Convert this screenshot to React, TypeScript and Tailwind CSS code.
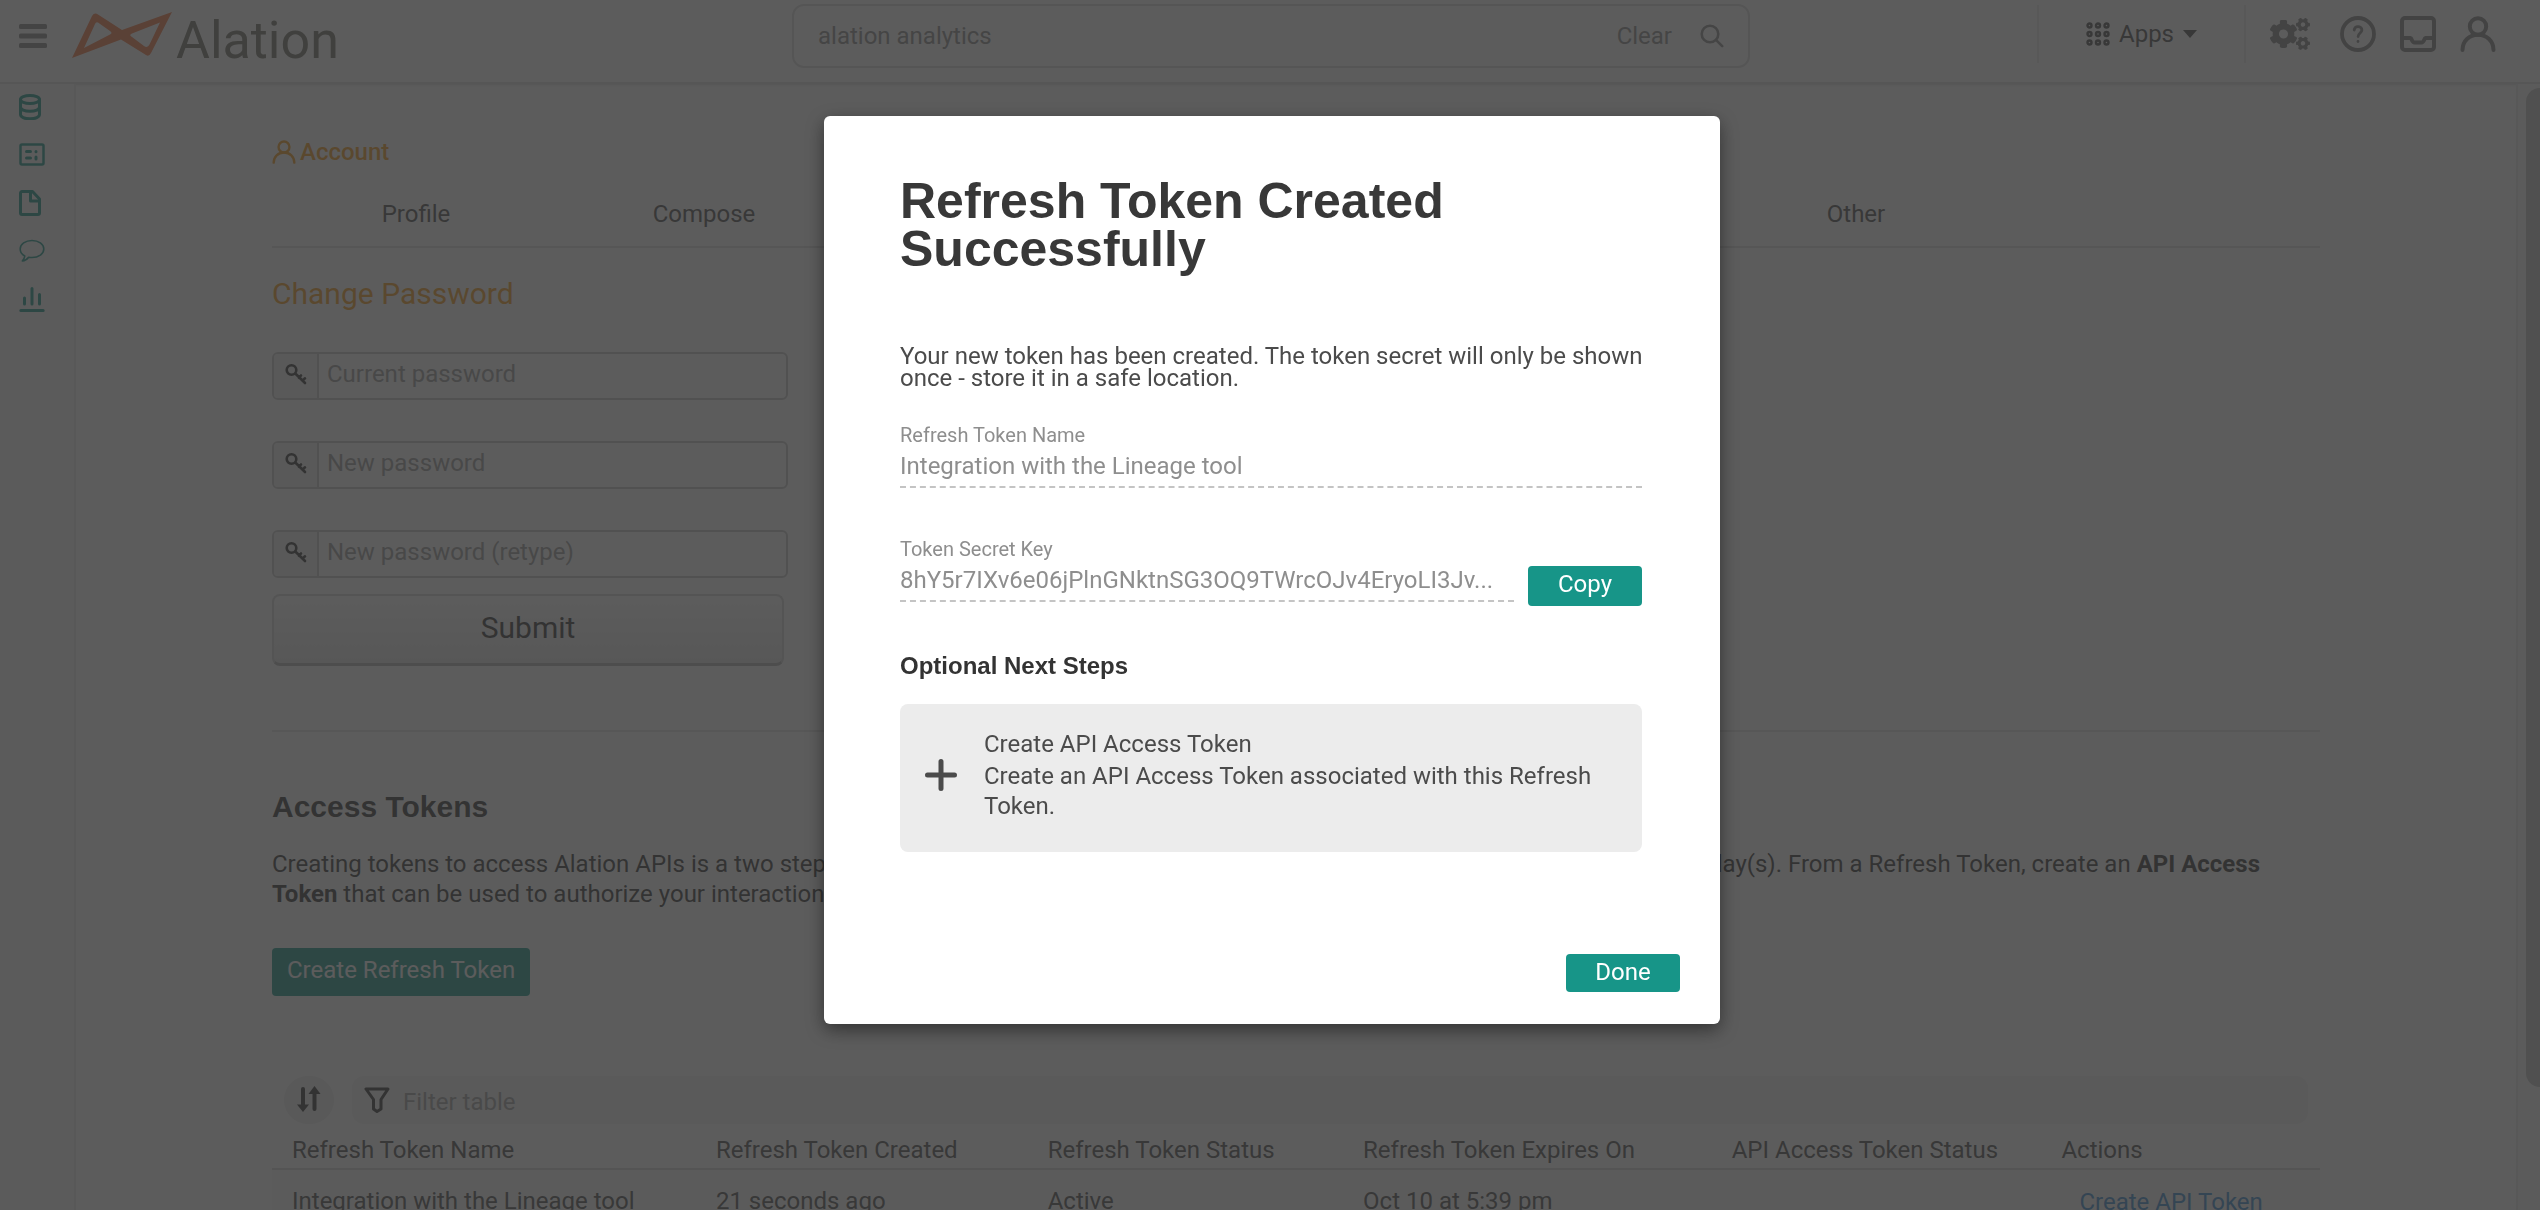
import type { ReactNode } from "react";
import { FaCogs } from "react-icons/fa";

type IconProps = { className?: string };

function Logo({ className }: IconProps) {
  return (
    <svg viewBox="0 0 100 46" className={className} fill="currentColor" fillRule="evenodd" aria-hidden="true">
      <path d="M0 46 L20 4 Q22.500 0 26 2.500 L50 18 L100 0 L79 41 Q77 45 74 43 L49 27.500 Z M12 36 L38 22.500 Q41 21 38 19 L26 10.500 Q24 9.500 23 12 Z M88 10.500 L60 21.500 Q56.500 23 60 25 L72 34 Q75.500 36.500 77.500 32.500 Z" />
    </svg>
  );
}

function MenuIcon({ className }: IconProps) {
  return (
    <svg viewBox="0 0 28 24" className={className} fill="currentColor" aria-hidden="true">
      <rect width="28" height="5" rx="1.500" />
      <rect y="9.500" width="28" height="5" rx="1.500" />
      <rect y="19" width="28" height="5" rx="1.500" />
    </svg>
  );
}

function Line({ className, box = "0 0 26 26", width = 2.5, children }: IconProps & { box?: string; width?: number; children: ReactNode }) {
  return (
    <svg viewBox={box} className={className} fill="none" stroke="currentColor" strokeWidth={width} strokeLinecap="round" strokeLinejoin="round" aria-hidden="true">
      {children}
    </svg>
  );
}

const DatabaseIcon = () => (
  <Line className="size-[26px]" width={3}>
    <ellipse cx="11" cy="5.500" rx="9.500" ry="4" />
    <path d="M1.500 5.500v15c0 2.400 4 4.300 9.500 4.300s9.500-1.900 9.500-4.300v-15M1.500 13c0 2.400 4 4.300 9.500 4.300s9.500-1.900 9.500-4.300" />
  </Line>
);
const QueryIcon = () => (
  <Line className="size-[26px]">
    <rect x="1.500" y="2.500" width="23" height="20" rx="1.500" />
    <path d="M7.500 9.500h4M7.500 16h4M17 9.500v0.200M17 15v2" strokeWidth="3" />
  </Line>
);
const DocumentIcon = () => (
  <Line className="size-[26px]" width={3}>
    <path d="M3 1.500h10.500l7 7.500v14a1.500 1.500 0 0 1-1.500 1.500H3A1.500 1.500 0 0 1 1.500 23V3A1.500 1.500 0 0 1 3 1.500z" />
    <path d="M11.500 1.500V11h9" />
  </Line>
);
const CommentIcon = () => (
  <Line className="size-[26px]" width={1.6}>
    <path d="M13 2.500c6.600 0 11.800 3.700 11.800 8.500S19.600 19.500 13 19.500c-1.200 0-2.300-.1-3.400-.3-1.600 2.200-3.600 3.500-6.300 3.800 1.400-1.500 2.300-3.100 2.500-5C2.900 16.500 1.200 14 1.200 11c0-4.800 5.200-8.500 11.800-8.500z" />
  </Line>
);
const ChartIcon = () => (
  <Line className="size-[26px]" width={3}>
    <path d="M5.500 12v6M13 2.500V18M20.500 8.500V18M1.800 24.500h22.400" />
  </Line>
);
const PersonIcon = ({ className, width = 4 }: IconProps & { width?: number }) => (
  <Line className={className} box="0 0 36 36" width={width}>
    <circle cx="18" cy="10.500" r="8.200" />
    <path d="M2.500 34c0-9 6.800-15.300 15.500-15.300S33.500 25 33.500 34" />
  </Line>
);
const HelpIcon = () => (
  <Line className="size-9" box="0 0 36 36" width={3.8}>
    <circle cx="18" cy="18" r="16" />
    <path d="M14.200 14c.2-2.200 1.700-3.400 3.800-3.400s3.900 1.400 3.900 3.500c0 2.800-3.800 3.200-3.800 6.500M18 25.300v.2" strokeWidth="2.800" />
  </Line>
);
const InboxIcon = () => (
  <Line className="size-9" box="0 0 36 36" width={4}>
    <rect x="2" y="2" width="32" height="32" rx="3" />
    <path d="M2 22h8.500c1.500 0 1 4.500 4 4.500h7c3 0 2.500-4.500 4-4.500H34" />
  </Line>
);
const SearchIcon = () => (
  <Line className="size-6" box="0 0 24 24" width={2.6}>
    <circle cx="10" cy="10" r="8.300" />
    <path d="M16.200 16.200l6 6" />
  </Line>
);
const GridIcon = () => (
  <svg viewBox="0 0 24 24" className="size-6" fill="none" stroke="currentColor" strokeWidth="2.400" aria-hidden="true">
    {[3.5, 12, 20.5].map((y) => [3.5, 12, 20.5].map((x) => <circle key={`${x}-${y}`} cx={x} cy={y} r="2" />))}
  </svg>
);
const KeyIcon = () => (
  <Line className="size-[22px]" box="0 0 22 22" width={2.6}>
    <circle cx="6.500" cy="7" r="4.800" />
    <path d="M10.300 10.500L20 20M16 12.500l-2 2.300M20 15.300l-2.500 2.300" />
  </Line>
);
const SortIcon = () => (
  <svg viewBox="0 0 24 26" className="h-[26px] w-6" aria-hidden="true">
    <path d="M6 3v18M17.500 5v18" stroke="currentColor" strokeWidth="4" strokeLinecap="round" />
    <path d="M0 18.500h12L6 26zM11.500 8h12L17.500 0z" fill="currentColor" />
  </svg>
);
const FilterIcon = () => (
  <Line className="size-[26px]" width={3}>
    <path d="M2 2h22l-7 10.500V22l-4 2.500L9.500 22v-9.500z" />
  </Line>
);
const PlusIcon = () => (
  <Line className="size-8 shrink-0" box="0 0 32 32" width={5}>
    <path d="M16 2.500v27M2.500 16h27" />
  </Line>
);

function Header() {
  return (
    <header className="grid h-[84px] shrink-0 grid-cols-[minmax(0,1fr)_minmax(0,960px)_minmax(0,1fr)] items-start border-b-2 border-[#e0e0e0] pt-1 shadow-sm">
      <div className="flex h-16 items-center pl-[19px] text-[#888]">
        <button type="button" aria-label="Menu" className="mr-[25px]">
          <MenuIcon className="h-6 w-7" />
        </button>
        <a href="#home" className="flex items-baseline gap-1">
          <Logo className="h-[46px] w-[100px] text-[#f47742]" />
          <span className="text-[52px] leading-10 text-[#737368]">Alation</span>
        </a>
      </div>
      <div className="ml-[2px] flex h-16 items-center rounded-xl border-2 border-[#dcdcdc] px-6 text-[#8c8c8c]">
        <input type="search" aria-label="Search" placeholder="alation analytics" className="min-w-0 flex-1 outline-none placeholder:text-[#8c8c8c]" />
        <button type="button">Clear</button>
        <button type="button" aria-label="Search" className="ml-7">
          <SearchIcon />
        </button>
      </div>
      <nav aria-label="Tools" className="flex h-[60px] items-center justify-end pr-11 text-[#808080]">
        <span className="h-[58px] w-[2px] bg-[#e8e8e8]" />
        <button type="button" className="mx-[47px] flex items-center gap-[9px] text-[#4a4a4a]">
          <GridIcon />
          Apps
          <svg viewBox="0 0 14 8" className="h-2 w-[14px]" fill="currentColor" aria-hidden="true">
            <path d="M0 0h14L7 8z" />
          </svg>
        </button>
        <span className="h-[58px] w-[2px] bg-[#e8e8e8]" />
        <button type="button" aria-label="Settings" className="ml-6">
          <FaCogs className="size-10" />
        </button>
        <button type="button" aria-label="Help" className="ml-[30px]">
          <HelpIcon />
        </button>
        <button type="button" aria-label="Inbox" className="ml-6">
          <InboxIcon />
        </button>
        <button type="button" aria-label="User" className="ml-6">
          <PersonIcon className="size-9" />
        </button>
      </nav>
    </header>
  );
}

const sideLinks: [string, () => ReactNode][] = [
  ["Sources", DatabaseIcon],
  ["Queries", QueryIcon],
  ["Articles", DocumentIcon],
  ["Conversations", CommentIcon],
  ["Analytics", ChartIcon],
];

function Sidebar() {
  return (
    <nav aria-label="Main" className="flex w-[76px] shrink-0 flex-col gap-[22px] border-r-2 border-[#e8e8e8] bg-[#fafafa] pt-[10px] pl-[19px] text-[#179588]">
      {sideLinks.map(([name, Icon]) => (
        <a key={name} href={`#${name.toLowerCase()}`} aria-label={name}>
          <Icon />
        </a>
      ))}
    </nav>
  );
}

function PasswordField({ label }: { label: string }) {
  return (
    <label className="flex h-12 overflow-hidden rounded-md border-2 border-[#c8c8c8]">
      <span className="flex w-[45px] items-center justify-center border-r-2 border-[#c8c8c8] bg-[#eee] pb-1">
        <KeyIcon />
      </span>
      <input type="password" aria-label={label} placeholder={label} className="min-w-0 flex-1 pb-1 pl-2 outline-none placeholder:text-[#9b9b9b]" />
    </label>
  );
}

function TokensTable() {
  return (
    <table className="w-full table-fixed text-left text-[#4b4b4b]">
      <colgroup>
        <col className="w-[20.7%]" />
        <col className="w-[16.2%]" />
        <col className="w-[15.4%]" />
        <col className="w-[18%]" />
        <col className="w-[16.1%]" />
        <col />
      </colgroup>
      <thead>
        <tr className="border-b-2 border-[#d5d5d5]">
          {["Refresh Token Name", "Refresh Token Created", "Refresh Token Status", "Refresh Token Expires On", "API Access Token Status", "Actions"].map((h) => (
            <th key={h} className="pt-[11px] pb-[3px] pl-5 font-normal">{h}</th>
          ))}
        </tr>
      </thead>
      <tbody>
        <tr className="bg-[#f9f9f9]">
          {["Integration with the Lineage tool", "21 seconds ago", "Active", "Oct 10 at 5:39 pm", ""].map((c, i) => (
            <td key={i} className="pt-[15px] pb-4 pl-5">{c}</td>
          ))}
          <td className="pt-[17px] pb-4 pl-[38px]">
            <a href="#create-api-token" className="text-[#3a8ad2]">Create API Token</a>
          </td>
        </tr>
      </tbody>
    </table>
  );
}

function AccountPage() {
  return (
    <main className="min-w-0 flex-1 overflow-hidden">
      <div className="mx-auto w-full max-w-[2048px] pt-[53px]">
        <a href="#account" className="flex items-center gap-1 font-medium text-[#f59b1c]">
          <PersonIcon className="size-6" width={3.6} />
          Account
        </a>
        <nav aria-label="Account sections" className="mt-8 border-b-2 border-[#dedede] pb-[17px]">
          <div className="grid max-w-[2016px] grid-cols-7 text-center text-[#4b4b4b]">
            <a href="#profile">Profile</a>
            <a href="#compose">Compose</a>
            <a href="#other" className="col-start-6">Other</a>
          </div>
        </nav>
        <h2 className="mt-7 text-[30px] leading-9 text-[#f59b1c]">Change Password</h2>
        <form className="mt-10 w-[516px]">
          <div className="flex flex-col gap-[41px]">
            <PasswordField label="Current password" />
            <PasswordField label="New password" />
            <PasswordField label="New password (retype)" />
          </div>
          <button type="button" className="mt-4 h-[72px] w-[512px] rounded-lg border-2 border-b-[3px] border-[#d4d4d4] border-b-[#b4b4b4] bg-linear-to-b from-white to-[#e6e6e6] pb-1 text-[30px] leading-9">
            Submit
          </button>
        </form>
        <hr className="mt-16 border-t-2 border-[#e4e4e4]" />
        <h2 className="mt-[57px] font-['Liberation_Sans',sans-serif] text-[30px] leading-9 font-bold">Access Tokens</h2>
        <p className="mt-6">
          Creating tokens to access Alation APIs is a two step{" "}
          <span className="inline-block w-[871px] whitespace-nowrap">process. First, create a Refresh Token. A Refresh Token will expire in 60</span>{" "}
          day(s). From a Refresh Token, create an <strong>API Access<br />Token</strong> that can be used to authorize your interactions with Alation APIs.
        </p>
        <button type="button" className="mt-[39px] block h-12 rounded-sm bg-[#179588] px-[15px] pb-1 text-white">
          Create Refresh Token
        </button>
        <div className="mt-20 flex items-center gap-[18px] px-3">
          <button type="button" aria-label="Sort" className="flex h-12 w-[50px] items-center justify-center rounded-full bg-[#ededed] pb-[3px]">
            <SortIcon />
          </button>
          <label className="flex h-12 flex-1 items-center rounded-xl bg-[#f4f4f4] pl-3">
            <FilterIcon />
            <input aria-label="Filter table" placeholder="Filter table" className="ml-[13px] min-w-0 flex-1 pt-1 outline-none placeholder:text-[#a0a0a0]" />
          </label>
        </div>
        <TokensTable />
      </div>
    </main>
  );
}

function ReadOnlyField({ label, value, className }: { label: string; value: string; className?: string }) {
  return (
    <label className={className}>
      <span className="block text-[20px] leading-6 text-[#8e8e8e]">{label}</span>
      <input readOnly value={value} className="mt-1 block h-[37px] w-full border-b-2 border-dashed border-[#c4c4c4] pb-[5px] text-[#8e8e8e] outline-none" />
    </label>
  );
}

function TokenDialog() {
  return (
    <div className="fixed inset-0 flex items-start justify-center bg-[#333]/80 pt-[116px] pl-1">
      <section role="dialog" aria-modal="true" aria-labelledby="dialog-title" className="w-[896px] rounded-md bg-white pt-[61px] pb-8 shadow-[0_6px_18px_rgba(0,0,0,0.45)]">
        <div className="pr-[78px] pl-[76px]">
          <h1 id="dialog-title" className="font-['Liberation_Sans',sans-serif] text-[50px] leading-[48px] font-bold text-[#383838]">
            Refresh Token Created Successfully
          </h1>
          <p className="mt-[72px] -mr-2 leading-[22px] text-[#4b4b4b]">
            Your new token has been created. The token secret will only be shown once - store it in a safe location.
          </p>
          <ReadOnlyField className="mt-[34px] block" label="Refresh Token Name" value="Integration with the Lineage tool" />
          <div className="mt-[49px] flex items-end gap-[14px]">
            <ReadOnlyField className="mb-1 block flex-1" label="Token Secret Key" value="8hY5r7IXv6e06jPlnGNktnSG3OQ9TWrcOJv4EryoLI3Jv..." />
            <button type="button" className="h-10 w-[114px] rounded-sm bg-[#179588] pb-1 text-white">Copy</button>
          </div>
          <h2 className="mt-[45px] font-['Liberation_Sans',sans-serif] text-[24px] font-bold">Optional Next Steps</h2>
          <button type="button" className="mt-[23px] flex w-full items-center gap-[27px] rounded-lg bg-[#ececec] pt-[25px] pr-6 pb-[31px] pl-[25px] text-left text-[#4b4b4b]">
            <PlusIcon />
            <span>
              <span className="mb-[2px] block">Create API Access Token</span>
              <span className="block">Create an API Access Token associated with this Refresh Token.</span>
            </span>
          </button>
        </div>
        <div className="mt-[102px] flex justify-end pr-10">
          <button type="button" className="h-[38px] w-[114px] rounded-sm bg-[#179588] pb-[2px] text-white">Done</button>
        </div>
      </section>
    </div>
  );
}

export default function App() {
  return (
    <div className="flex h-screen flex-col overflow-hidden bg-white font-['Roboto',sans-serif] text-[24px] leading-[30px] text-[#333]">
      <Header />
      <div className="flex min-h-0 flex-1">
        <Sidebar />
        <AccountPage />
        <div className="flex w-6 shrink-0 justify-end border-l-2 border-[#ececec] bg-[#fafafa] pt-1">
          <div className="h-[89%] w-[14px] rounded-l-full rounded-r-md bg-[#c1c1c1]" />
        </div>
      </div>
      <TokenDialog />
    </div>
  );
}
